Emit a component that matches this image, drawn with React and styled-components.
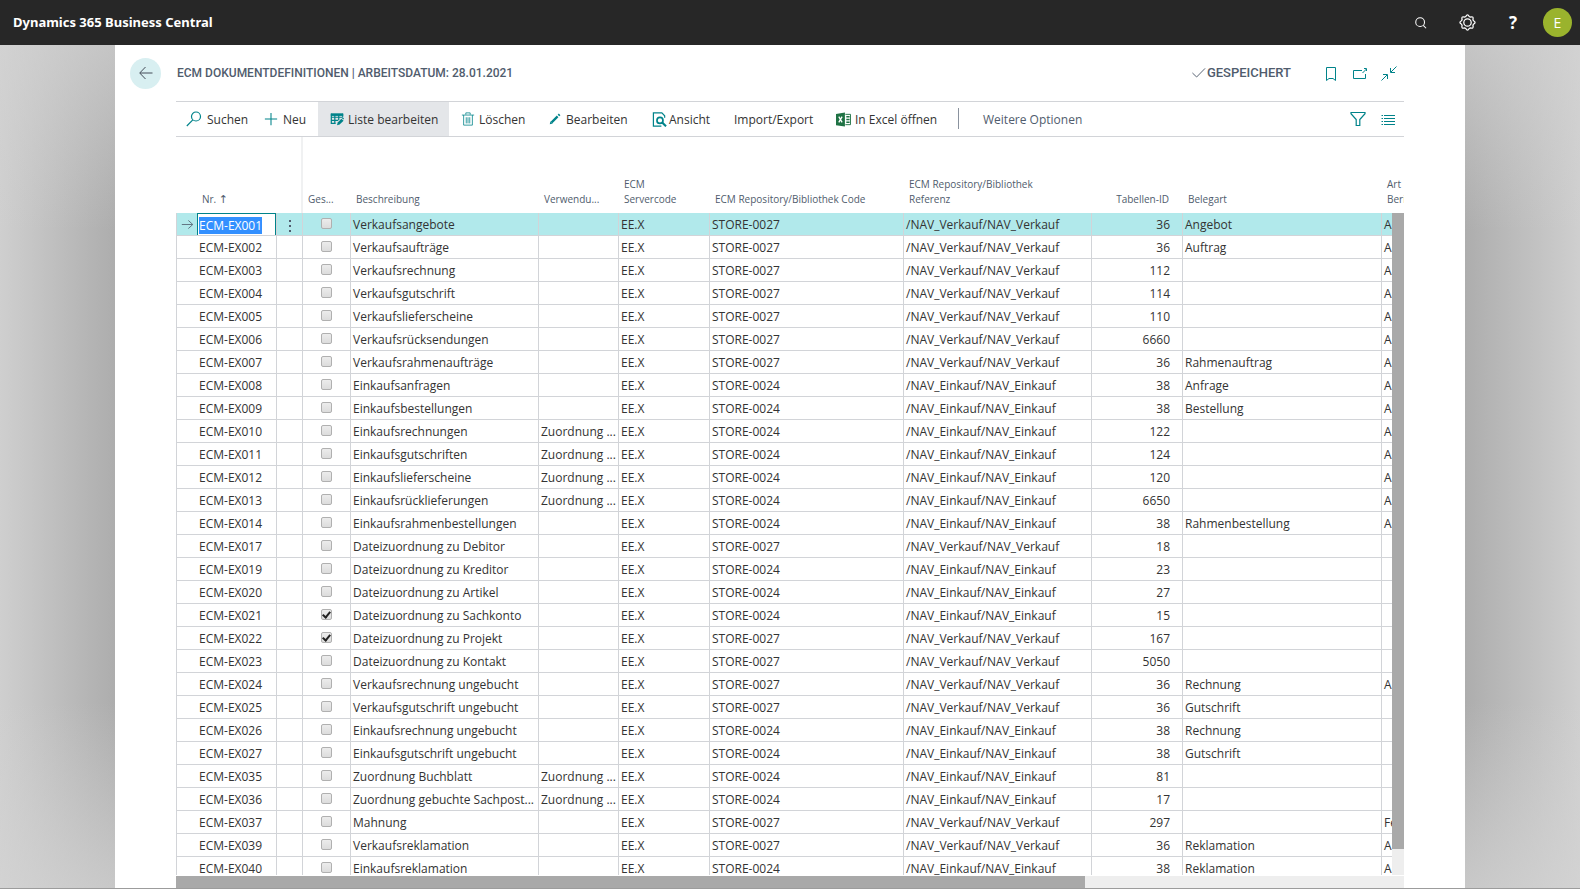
import React, { useEffect, useRef } from 'react'
import styled, { createGlobalStyle } from 'styled-components'

const GlobalStyle = createGlobalStyle`
  * {
    box-sizing: border-box;
  }

  body {
    margin: 0;
    font-family: 'Open Sans', 'Noto Sans', sans-serif;
    font-size: 12px;
    color: #333;
  }

  button,
  input {
    font: inherit;
    color: inherit;
  }
`

const Page = styled.div`
  display: flex;
  flex-direction: column;
  height: 100vh;
  overflow: hidden;
  border-bottom: 1px solid #9c9c9c;
`

const TopBar = styled.header`
  display: flex;
  align-items: center;
  justify-content: space-between;
  flex: none;
  height: 45px;
  padding: 0 8px 0 13px;
  background: #272727;
  color: #fff;
`

const Brand = styled.a`
  padding-bottom: 2px;
  color: #fff;
  font-family: 'Noto Sans', sans-serif;
  font-size: 13px;
  font-weight: 700;
  text-decoration: none;
`

const TopActions = styled.div`
  display: flex;
  align-items: center;
  gap: 14px;
`

const IconButton = styled.button`
  display: flex;
  align-items: center;
  justify-content: center;
  width: ${(p) => p.$size || 32}px;
  height: ${(p) => p.$size || 32}px;
  padding: 0;
  border: 0;
  background: transparent;
  color: ${(p) => p.$color || '#00838a'};
  cursor: pointer;
`

const HelpButton = styled(IconButton)`
  font-size: 17px;
  font-weight: 700;
`

const Avatar = styled.button`
  width: 29px;
  height: 29px;
  padding: 0;
  border: 0;
  border-radius: 50%;
  background: #9ab32d;
  color: #fff;
  font-size: 14px;
`

const Stage = styled.main`
  display: flex;
  flex: 1;
  min-height: 0;
  padding: 0 115px;
  background:
    linear-gradient(rgba(212, 212, 212, 0.6), transparent 22%, transparent 78%, rgba(212, 212, 212, 0.7)),
    linear-gradient(90deg, #cfcfcf, #adadad 115px, #adadad calc(100% - 115px), #cfcfcf);
`

const Sheet = styled.section`
  display: flex;
  flex-direction: column;
  flex: 1;
  min-width: 0;
  padding: 0 61px;
  background: #fff;
`

const TitleRow = styled.div`
  display: flex;
  align-items: center;
  flex: none;
  height: 56px;
  margin-left: -46px;
`

const BackButton = styled.button`
  display: flex;
  align-items: center;
  justify-content: center;
  width: 31px;
  height: 31px;
  padding: 0;
  border: 0;
  border-radius: 50%;
  background: #d8eff1;
  color: #444c58;
`

const Title = styled.h1`
  flex: 1;
  margin: 0 0 1px 16px;
  color: #505c6d;
  font-family: Roboto, sans-serif;
  font-size: 12px;
  font-weight: 500;
`

const Saved = styled.span`
  display: flex;
  align-items: center;
  gap: 1px;
  margin: 0 25px 2px 0;
  color: #505c6d;
  font-family: Roboto, sans-serif;
  font-size: 13px;
  font-weight: 500;
`

const TitleActions = styled.div`
  display: flex;
  margin-right: 1px;
`

const Toolbar = styled.div`
  display: flex;
  flex: none;
  height: 36px;
  border-top: 1px solid #d2d4d8;
  border-bottom: 1px solid #d2d4d8;
`

const Tool = styled.button`
  display: flex;
  align-items: center;
  flex: none;
  gap: ${(p) => p.$gap || 4}px;
  width: ${(p) => p.$width}px;
  padding: 0 0 0 ${(p) => p.$inset || 12}px;
  border: 0;
  background: ${(p) => (p.$active ? '#e4e6e9' : 'transparent')};
  color: ${(p) => (p.$muted ? '#505c6d' : '#333')};
  white-space: nowrap;

  svg {
    flex: none;
    color: #00838a;
  }
`

const Divider = styled.span`
  flex: none;
  width: 1px;
  height: 21px;
  margin: 6px 12px 0 0;
  background: #8a929e;
`

const ToolbarEnd = styled.div`
  display: flex;
  align-items: center;
  margin: 0 1px 0 auto;
`

const Grid = styled.div`
  position: relative;
  flex: 1;
  min-height: 0;
  overflow: hidden;
`

const Table = styled.table`
  width: 1300px;
  border-collapse: separate;
  border-spacing: 0;
  table-layout: fixed;
`

const HeadCell = styled.th`
  height: 76px;
  padding: 0 ${(p) => (p.$right ? 14 : 5)}px 6px;
  border-right: ${(p) => (p.$frozen ? '2px solid #f0f1f2' : '0')};
  color: #505c6d;
  font-size: 10px;
  font-weight: 400;
  line-height: 15px;
  text-align: ${(p) => (p.$right ? 'right' : 'left')};
  vertical-align: bottom;
  white-space: pre;
  overflow: hidden;
`

const SortArrow = styled.span`
  font-family: 'DejaVu Sans', sans-serif;
  font-size: 11px;
`

const Row = styled.tr`
  background: ${(p) => (p.$selected ? '#b1e9eb' : '#fff')};
`

const Cell = styled.td`
  height: 23px;
  padding: ${(p) => (p.$right ? '2px 12px 0 0' : '2px 1px 0 2px')};
  border-right: 1px solid #d2d4d8;
  border-bottom: 1px solid #d2d4d8;
  line-height: 20px;
  text-align: ${(p) => (p.$right ? 'right' : 'left')};
  white-space: nowrap;
  overflow: hidden;
`

const MarkerCell = styled(Cell)`
  padding: 0;
  border-left: 1px solid #d2d4d8;
  border-right: 0;
  color: #505c6d;

  svg {
    display: block;
    margin: 0 auto;
  }
`

const NumberCell = styled(Cell)`
  ${(p) => p.$editing && 'padding: 0;'}
`

const NumberInput = styled.input`
  display: block;
  width: 100%;
  height: 22px;
  padding: 1px 1px 0;
  border: 1px solid #00838a;
  border-bottom: 0;
  border-radius: 0;
  outline: 0;
  background: #fff;

  &::selection {
    background: #3390ff;
    color: #fff;
  }
`

const ControlCell = styled(Cell)`
  padding: 0;
`

const Check = styled.input`
  display: flex;
  align-items: flex-start;
  justify-content: center;
  appearance: none;
  width: 11px;
  height: 11px;
  margin: 0 auto 2px 18px;
  border: 1px solid #b0b0b0;
  border-radius: 2px;
  background: linear-gradient(#ececec, #dcdcdc);

  &:checked::before {
    content: '';
    flex: none;
    box-sizing: border-box;
    width: 5px;
    height: 8px;
    border: solid #222;
    border-width: 0 2px 2px 0;
    transform: rotate(40deg);
  }
`

const MenuButton = styled.button`
  display: block;
  width: 100%;
  height: 22px;
  padding: 3px 0 0;
  border: 0;
  background: transparent;
  color: #505c6d;

  svg {
    display: block;
    margin: 0 auto;
  }
`

const VerticalTrack = styled.div`
  position: absolute;
  top: 76px;
  right: 0;
  bottom: 0;
  width: 12px;
  background: #eee;
`

const VerticalThumb = styled.div`
  height: 96%;
  background: #a9a9a9;
`

const HorizontalTrack = styled.div`
  flex: none;
  height: 12px;
  margin-top: 1px;
  background: #eee;
`

const HorizontalThumb = styled.div`
  width: 74%;
  height: 100%;
  background: #a9a9a9;
`

const Svg = ({ size = 16, width = 1, children }) => (
  <svg width={size} height={size} viewBox="0 0 16 16" fill="none" stroke="currentColor" strokeWidth={width} aria-hidden="true">
    {children}
  </svg>
)

const SearchIcon = () => (
  <Svg size={14} width={1.2}>
    <circle cx="7" cy="7" r="5" />
    <path d="M10.600 10.600 13.800 14" />
  </Svg>
)

const GearIcon = () => (
  <Svg size={17} width={1.2}>
    <path d="M6.400 2.400Q8 -.6 9.600 2.400L10.800 2.900Q14.100 1.900 13.100 5.200L13.600 6.400Q16.600 8 13.600 9.600L13.100 10.800Q14.100 14.100 10.800 13.100L9.600 13.600Q8 16.600 6.400 13.600L5.200 13.100Q1.900 14.100 2.900 10.800L2.400 9.600Q-.6 8 2.400 6.400L2.900 5.200Q1.900 1.900 5.200 2.900z" />
    <circle cx="8" cy="8" r="3.500" />
  </Svg>
)

const BackIcon = () => (
  <Svg>
    <path d="M14.500 8H2M7.500 2 1.700 8l5.800 6" />
  </Svg>
)

const TickIcon = () => (
  <Svg size={15}>
    <path d="M1.500 8.500 6 12.800 15 3.600" />
  </Svg>
)

const BookmarkIcon = () => (
  <Svg>
    <path d="M3.500 2.500h9v13L10 13.500H6l-2.500 2z" />
  </Svg>
)

const PopoutIcon = () => (
  <Svg>
    <path d="M10 5.500H1.500v8h12V9M10.500 8l4-4M12 3.500H14.500V6" />
  </Svg>
)

const CollapseIcon = () => (
  <Svg>
    <path d="M15.500 1.500 10 7M9.500 3v4.500H14M.5 15.500 6 10M2 9.500h4.500V14" />
  </Svg>
)

const FindIcon = () => (
  <Svg width={1.2}>
    <circle cx="10" cy="5.500" r="4.500" />
    <path d="M6.800 8.800.8 15" />
  </Svg>
)

const PlusIcon = () => (
  <Svg size={14} width={1.2}>
    <path d="M8 1v14M1 8h14" />
  </Svg>
)

const EditListIcon = () => (
  <Svg size={14} width={1.4}>
    <path d="M1.500 2v11h5M14.500 2v3.500M1.500 6h13M1.500 9.500h8M5.500 3v10M10 3v6" />
    <path d="M1 3h14" strokeWidth="3" />
    <path d="m8 15 .8-3 4.200-4.400L15.500 10 11 14.300z" fill="currentColor" stroke="none" />
    <path d="m13.600 7 1-1 1.400 1.500-.8 1z" fill="currentColor" stroke="none" />
  </Svg>
)

const TrashIcon = () => (
  <Svg size={14} width={0.9}>
    <path d="M1 3.500h14M5.500 3V1h5v2M3 3.500V15h10V3.500M6 6v7M8 6v7M10 6v7" />
  </Svg>
)

const PencilIcon = () => (
  <Svg size={12} width={3}>
    <path d="M3.500 12.500 11.500 4.500M12.600 3.400l1.600-1.600" />
    <path d="m1 15 1-4 3 3z" fill="currentColor" stroke="none" />
  </Svg>
)

const ViewIcon = () => (
  <Svg size={15} width={1.3}>
    <path d="M13.500 6V4L10.500 1H1.500v14H10" />
    <circle cx="8.500" cy="9" r="3.200" strokeWidth="1.800" />
    <path d="m10.800 11.300 4.200 4" strokeWidth="2.200" />
  </Svg>
)

const ExcelIcon = () => (
  <svg width="15" height="15" viewBox="0 0 16 16" aria-hidden="true">
    <path d="M0 2 9.500.5v15L0 14z" fill="#1f7244" />
    <path d="M10 2.500h5.500v11H10" fill="none" stroke="#1f7244" />
    <path d="M11 5h3.500M11 8h3.500M11 11h3.500" stroke="#1f7244" strokeWidth="1.500" />
    <path d="m3 5 3.500 6M6.500 5 3 11" stroke="#fff" strokeWidth="1.400" />
  </svg>
)

const FilterIcon = () => (
  <Svg width={1.2}>
    <path d="M1 1.500h14v1.200L9.800 8.500V14.500H6.200V8.500L1 2.700z" />
  </Svg>
)

const ListIcon = () => (
  <Svg>
    <path d="M1.500 4.500H3M4 4.500h11M1.500 7.500H3M4 7.500h11M1.500 10.500H3M4 10.500h11M1.500 13.500H3M4 13.500h11" />
  </Svg>
)

const RowArrow = () => (
  <Svg size={13}>
    <path d="M1 8h13M9 3l5.500 5L9 13" />
  </Svg>
)

const Dots = () => (
  <svg width="4" height="14" viewBox="0 0 4 14" fill="currentColor" aria-hidden="true">
    <path d="M1 1h2v2H1zM1 6h2v2H1zM1 11h2v2H1z" />
  </svg>
)

const columns = [
  { width: 21, label: '' },
  { width: 80, label: 'Nr. ', sorted: true },
  { width: 26, label: '', frozen: true },
  { width: 48, label: 'Ges...' },
  { width: 188, label: 'Beschreibung' },
  { width: 80, label: 'Verwendu...' },
  { width: 91, label: 'ECM\nServercode' },
  { width: 194, label: 'ECM Repository/Bibliothek Code' },
  { width: 188, label: 'ECM Repository/Bibliothek\nReferenz' },
  { width: 91, label: 'Tabellen-ID', right: true },
  { width: 199, label: 'Belegart' },
  { width: 94, label: 'Art\nBeri' },
]

const ASSIGN = 'Zuordnung ...'

// nr, description, usage, area, table id, document type, report kind, blocked
const rows = [
  ['001', 'Verkaufsangebote', '', 'Verkauf', 36, 'Angebot', 'A'],
  ['002', 'Verkaufsaufträge', '', 'Verkauf', 36, 'Auftrag', 'A'],
  ['003', 'Verkaufsrechnung', '', 'Verkauf', 112, '', 'A'],
  ['004', 'Verkaufsgutschrift', '', 'Verkauf', 114, '', 'A'],
  ['005', 'Verkaufslieferscheine', '', 'Verkauf', 110, '', 'A'],
  ['006', 'Verkaufsrücksendungen', '', 'Verkauf', 6660, '', 'A'],
  ['007', 'Verkaufsrahmenaufträge', '', 'Verkauf', 36, 'Rahmenauftrag', 'A'],
  ['008', 'Einkaufsanfragen', '', 'Einkauf', 38, 'Anfrage', 'A'],
  ['009', 'Einkaufsbestellungen', '', 'Einkauf', 38, 'Bestellung', 'A'],
  ['010', 'Einkaufsrechnungen', ASSIGN, 'Einkauf', 122, '', 'A'],
  ['011', 'Einkaufsgutschriften', ASSIGN, 'Einkauf', 124, '', 'A'],
  ['012', 'Einkaufslieferscheine', ASSIGN, 'Einkauf', 120, '', 'A'],
  ['013', 'Einkaufsrücklieferungen', ASSIGN, 'Einkauf', 6650, '', 'A'],
  ['014', 'Einkaufsrahmenbestellungen', '', 'Einkauf', 38, 'Rahmenbestellung', 'A'],
  ['017', 'Dateizuordnung zu Debitor', '', 'Verkauf', 18, '', ''],
  ['019', 'Dateizuordnung zu Kreditor', '', 'Einkauf', 23, '', ''],
  ['020', 'Dateizuordnung zu Artikel', '', 'Einkauf', 27, '', ''],
  ['021', 'Dateizuordnung zu Sachkonto', '', 'Einkauf', 15, '', '', true],
  ['022', 'Dateizuordnung zu Projekt', '', 'Verkauf', 167, '', '', true],
  ['023', 'Dateizuordnung zu Kontakt', '', 'Verkauf', 5050, '', ''],
  ['024', 'Verkaufsrechnung ungebucht', '', 'Verkauf', 36, 'Rechnung', 'A'],
  ['025', 'Verkaufsgutschrift ungebucht', '', 'Verkauf', 36, 'Gutschrift', ''],
  ['026', 'Einkaufsrechnung ungebucht', '', 'Einkauf', 38, 'Rechnung', ''],
  ['027', 'Einkaufsgutschrift ungebucht', '', 'Einkauf', 38, 'Gutschrift', ''],
  ['035', 'Zuordnung Buchblatt', ASSIGN, 'Einkauf', 81, '', ''],
  ['036', 'Zuordnung gebuchte Sachpost...', ASSIGN, 'Einkauf', 17, '', ''],
  ['037', 'Mahnung', '', 'Verkauf', 297, '', 'Fe'],
  ['039', 'Verkaufsreklamation', '', 'Verkauf', 36, 'Reklamation', 'A'],
  ['040', 'Einkaufsreklamation', '', 'Einkauf', 38, 'Reklamation', 'A'],
]

const DefinitionRow = ({ row, selected }) => {
  const [id, description, usage, area, tableId, docType, report, blocked] = row
  const nr = `ECM-EX${id}`
  const inputRef = useRef(null)

  useEffect(() => {
    if (selected) {
      inputRef.current.focus()
      inputRef.current.select()
    }
  }, [selected])

  return (
    <Row $selected={selected}>
      <MarkerCell>{selected && <RowArrow />}</MarkerCell>
      <NumberCell $editing={selected}>
        {selected ? <NumberInput ref={inputRef} aria-label="Nr." defaultValue={nr} /> : nr}
      </NumberCell>
      <ControlCell>
        {selected && (
          <MenuButton aria-label="Weitere Optionen anzeigen">
            <Dots />
          </MenuButton>
        )}
      </ControlCell>
      <ControlCell>
        <Check type="checkbox" aria-label={`${nr} gesperrt`} defaultChecked={blocked} />
      </ControlCell>
      <Cell>{description}</Cell>
      <Cell>{usage}</Cell>
      <Cell>EE.X</Cell>
      <Cell>{area === 'Verkauf' ? 'STORE-0027' : 'STORE-0024'}</Cell>
      <Cell>{`/NAV_${area}/NAV_${area}`}</Cell>
      <Cell $right>{tableId}</Cell>
      <Cell>{docType}</Cell>
      <Cell>{report}</Cell>
    </Row>
  )
}

const App = () => {
  return (
    <>
      <GlobalStyle />
      <Page>
        <TopBar>
          <Brand href="#">Dynamics 365 Business Central</Brand>
          <TopActions>
            <IconButton $color="#fff" aria-label="Suchen"><SearchIcon /></IconButton>
            <IconButton $color="#fff" aria-label="Einstellungen"><GearIcon /></IconButton>
            <HelpButton $color="#fff" aria-label="Hilfe">?</HelpButton>
            <Avatar aria-label="Konto">E</Avatar>
          </TopActions>
        </TopBar>
        <Stage>
          <Sheet>
            <TitleRow>
              <BackButton aria-label="Zurück"><BackIcon /></BackButton>
              <Title>ECM DOKUMENTDEFINITIONEN | ARBEITSDATUM: 28.01.2021</Title>
              <Saved><TickIcon />GESPEICHERT</Saved>
              <TitleActions>
                <IconButton $size={29} aria-label="Lesezeichen"><BookmarkIcon /></IconButton>
                <IconButton $size={29} aria-label="In neuem Fenster öffnen"><PopoutIcon /></IconButton>
                <IconButton $size={29} aria-label="Verkleinern"><CollapseIcon /></IconButton>
              </TitleActions>
            </TitleRow>
            <Toolbar>
              <Tool $width={79} $inset={10} $gap={5}><FindIcon />Suchen</Tool>
              <Tool $width={63} $inset={9} $gap={5}><PlusIcon />Neu</Tool>
              <Tool $width={131} $active><EditListIcon />Liste bearbeiten</Tool>
              <Tool $width={88}><TrashIcon />Löschen</Tool>
              <Tool $width={103} $gap={5}><PencilIcon />Bearbeiten</Tool>
              <Tool $width={82} $gap={2}><ViewIcon />Ansicht</Tool>
              <Tool $width={102}>Import/Export</Tool>
              <Tool $width={134}><ExcelIcon />In Excel öffnen</Tool>
              <Divider />
              <Tool $muted>Weitere Optionen</Tool>
              <ToolbarEnd>
                <IconButton $size={30} aria-label="Filter"><FilterIcon /></IconButton>
                <IconButton $size={30} aria-label="Listenansicht"><ListIcon /></IconButton>
              </ToolbarEnd>
            </Toolbar>
            <Grid>
              <Table>
                <colgroup>
                  {columns.map((c, i) => <col key={i} width={c.width} />)}
                </colgroup>
                <thead>
                  <tr>
                    {columns.map((c, i) => (
                      <HeadCell key={i} $right={c.right} $frozen={c.frozen}>
                        {c.label}
                        {c.sorted && <SortArrow>↑</SortArrow>}
                      </HeadCell>
                    ))}
                  </tr>
                </thead>
                <tbody>
                  {rows.map((row, i) => <DefinitionRow key={row[0]} row={row} selected={i === 0} />)}
                </tbody>
              </Table>
              <VerticalTrack><VerticalThumb /></VerticalTrack>
            </Grid>
            <HorizontalTrack><HorizontalThumb /></HorizontalTrack>
          </Sheet>
        </Stage>
      </Page>
    </>
  )
}

export default App
